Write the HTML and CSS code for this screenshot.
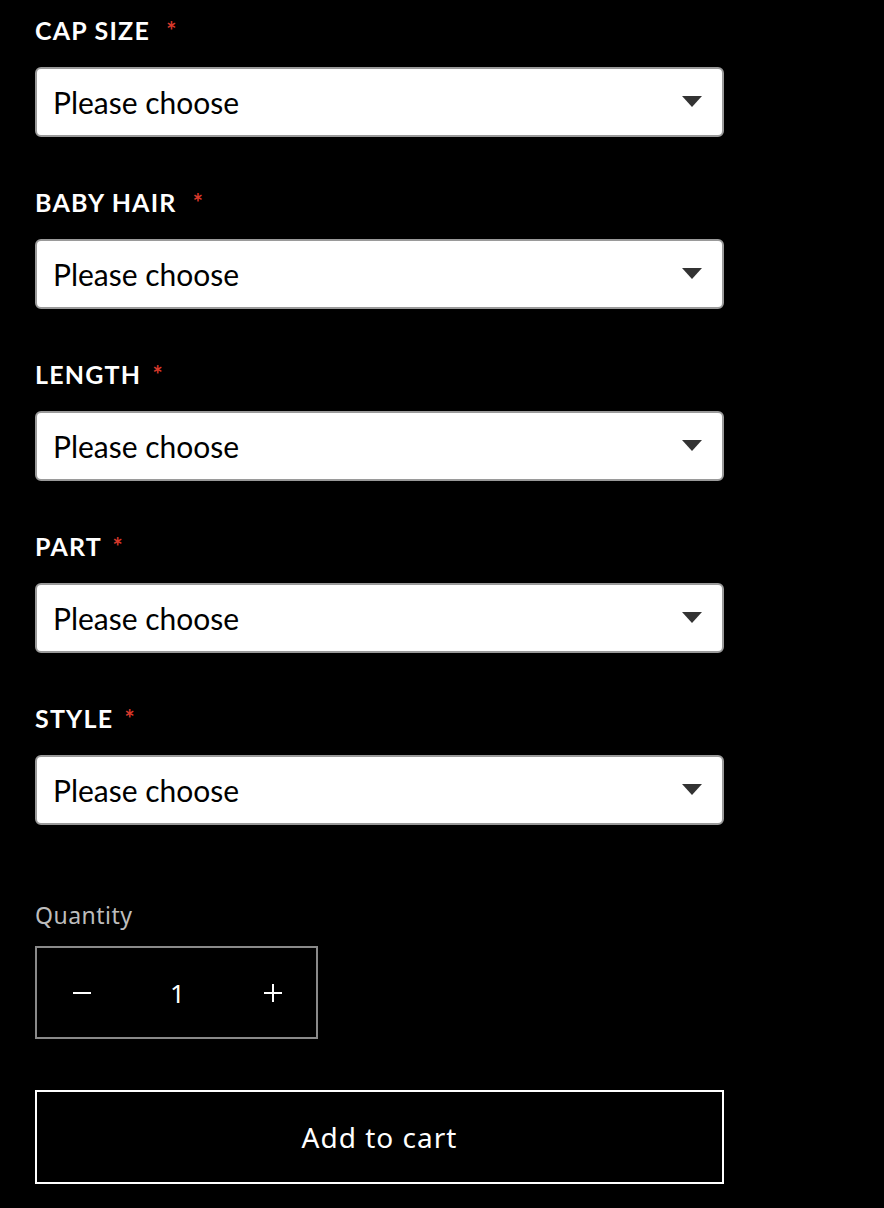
FILE: index.html
```html
<!DOCTYPE html>
<html>
<head>
    <title>Product options</title>
    <link rel="stylesheet" href="styles.css">
</head>
<body>
    <form class="product-form">
        <div class="field">
            <label class="field-label">CAP SIZE <span class="req wide">*</span></label>
            <div class="select">
                <span>Please choose</span>
                <svg class="arrow" width="20" height="11" viewBox="0 0 20 11"><path d="M0 0 H20 L10 11 Z" fill="#333"/></svg>
            </div>
        </div>
        <div class="field">
            <label class="field-label">BABY HAIR <span class="req wide">*</span></label>
            <div class="select">
                <span>Please choose</span>
                <svg class="arrow" width="20" height="11" viewBox="0 0 20 11"><path d="M0 0 H20 L10 11 Z" fill="#333"/></svg>
            </div>
        </div>
        <div class="field">
            <label class="field-label">LENGTH <span class="req">*</span></label>
            <div class="select">
                <span>Please choose</span>
                <svg class="arrow" width="20" height="11" viewBox="0 0 20 11"><path d="M0 0 H20 L10 11 Z" fill="#333"/></svg>
            </div>
        </div>
        <div class="field">
            <label class="field-label">PART <span class="req">*</span></label>
            <div class="select">
                <span>Please choose</span>
                <svg class="arrow" width="20" height="11" viewBox="0 0 20 11"><path d="M0 0 H20 L10 11 Z" fill="#333"/></svg>
            </div>
        </div>
        <div class="field">
            <label class="field-label">STYLE <span class="req">*</span></label>
            <div class="select">
                <span>Please choose</span>
                <svg class="arrow" width="20" height="11" viewBox="0 0 20 11"><path d="M0 0 H20 L10 11 Z" fill="#333"/></svg>
            </div>
        </div>

        <div class="quantity">
            <div class="quantity-label">Quantity</div>
            <div class="quantity-box">
                <button type="button" class="qty-btn">
                    <svg width="18" height="18" viewBox="0 0 18 18"><path d="M0 9 H18" stroke="#fff" stroke-width="2"/></svg>
                </button>
                <span class="qty-value">1</span>
                <button type="button" class="qty-btn">
                    <svg width="18" height="18" viewBox="0 0 18 18"><path d="M0 9 H18 M9 0 V18" stroke="#fff" stroke-width="2"/></svg>
                </button>
            </div>
        </div>

        <button type="button" class="add-cart">Add to cart</button>
    </form>
</body>
</html>
```

FILE: styles.css
```css
body {
    margin: 0;
    background: #000;
    color: #fff;
    font-family: Lato, 'Noto Sans', sans-serif;
}
.product-form {
    width: 689px;
    padding: 16px 0 0 35px;
}
.field {
    margin-bottom: 51px;
}
.field-label {
    display: block;
    font-size: 25px;
    line-height: 29px;
    font-weight: 700;
    letter-spacing: 1.2px;
    margin-bottom: 22px;
}
.req {
    color: #d8392b;
    font-size: 24px;
    line-height: 0;
    margin-left: 4px;
}
.req.wide {
    margin-left: 9px;
}
.select {
    box-sizing: border-box;
    height: 70px;
    background: #fff;
    border: 2px solid #9a9a9a;
    border-radius: 6px;
    display: flex;
    align-items: center;
    justify-content: space-between;
    padding: 0 20px 0 16px;
    color: #000;
    font-size: 30px;
}
.arrow {
    margin-top: -2px;
}
.quantity {
    margin-top: 76px;
}
.quantity-label {
    font-family: 'Noto Sans', sans-serif;
    font-size: 23px;
    line-height: 28px;
    color: #bdbdbd;
    letter-spacing: 0.5px;
    margin-bottom: 17px;
}
.quantity-box {
    box-sizing: border-box;
    width: 283px;
    height: 93px;
    border: 2px solid #8a8a8a;
    display: flex;
    align-items: center;
    justify-content: space-between;
    padding: 0 23px 0 25px;
}
.qty-btn {
    background: none;
    border: none;
    width: 40px;
    height: 40px;
    padding: 0;
    display: flex;
    align-items: center;
    justify-content: center;
    cursor: pointer;
}
.qty-value {
    font-family: 'Noto Sans', sans-serif;
    font-size: 26px;
    color: #fff;
}
.add-cart {
    box-sizing: border-box;
    display: block;
    width: 689px;
    height: 94px;
    margin-top: 51px;
    background: #000;
    border: 2px solid #fff;
    color: #fff;
    font-family: 'Noto Sans', sans-serif;
    font-size: 28px;
    letter-spacing: 1px;
    cursor: pointer;
}
```
